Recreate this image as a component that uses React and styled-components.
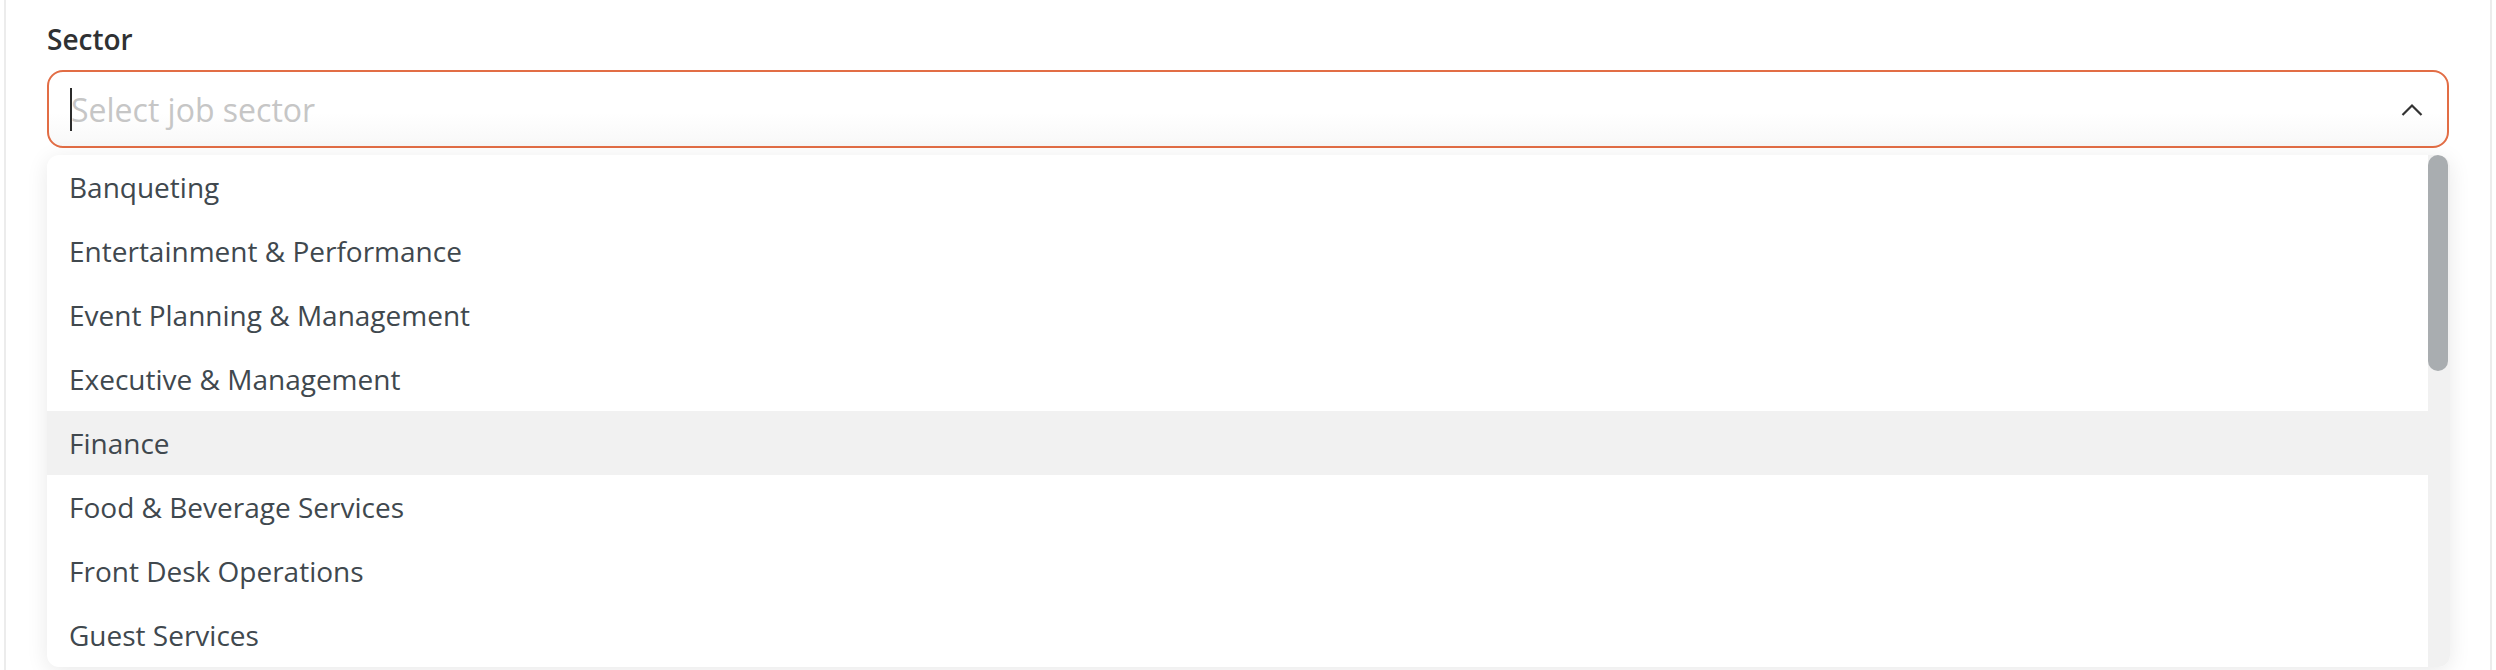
import React from 'react'
import styled, { createGlobalStyle } from 'styled-components'

const GlobalStyle = createGlobalStyle`
  html, body {
    margin: 0;
    padding: 0;
    background: #fff;
  }
  body {
    font-family: 'Open Sans', 'Noto Sans', sans-serif;
  }
`

const sectors = [
  'Banqueting',
  'Entertainment & Performance',
  'Event Planning & Management',
  'Executive & Management',
  'Finance',
  'Food & Beverage Services',
  'Front Desk Operations',
  'Guest Services',
]

// the full list is 19 rows long, only 8 fit in the menu
const TOTAL_ROWS = 19
const ROW_HEIGHT = 64
const MENU_HEIGHT = 512

const Page = styled.div`
  margin: 0 4px;
  min-height: 100vh;
  box-sizing: border-box;
  border-left: 2px solid #ececec;
  border-right: 2px solid #ececec;
  padding: 20px 41px 0;
`

const Label = styled.div`
  font-size: 28px;
  line-height: 38px;
  font-weight: 600;
  color: #2f3133;
  margin-bottom: 12px;
`

const Field = styled.div`
  position: relative;
`

const Control = styled.div`
  display: flex;
  align-items: center;
  height: 78px;
  box-sizing: border-box;
  border: 2px solid #e26d45;
  border-radius: 16px;
  padding: 0 24px 0 21px;
  background: linear-gradient(#ffffff 55%, #f8f8f8);
`

const Caret = styled.span`
  width: 2px;
  height: 43px;
  background: #2b2b2b;
  margin-right: -1px;
  flex-shrink: 0;
`

const Placeholder = styled.span`
  flex: 1;
  font-size: 32px;
  color: #c6c6c6;
  white-space: nowrap;
`

const Chevron = styled.svg`
  width: 22px;
  height: 13px;
  flex-shrink: 0;
`

const Menu = styled.div`
  position: absolute;
  top: calc(100% + 7px);
  left: 0;
  right: -1px;
  height: ${MENU_HEIGHT}px;
  display: flex;
  overflow: hidden;
  background: #fff;
  border-radius: 12px;
  box-shadow: 0 4px 22px rgba(0, 0, 0, 0.09);
`

const List = styled.div`
  flex: 1;
  min-width: 0;
`

const Option = styled.div`
  height: ${ROW_HEIGHT}px;
  display: flex;
  align-items: center;
  padding-left: 22px;
  font-size: 28px;
  color: #40484e;
  background: ${(p) => (p.$active ? '#f1f1f1' : 'transparent')};
  white-space: nowrap;
`

const Track = styled.div`
  width: 22px;
  box-sizing: border-box;
  padding-right: 2px;
  background: #f1f1f1;
  flex-shrink: 0;
`

const Thumb = styled.div`
  background: #a9adb0;
  border-radius: 10px;
`

export default function App() {
  const thumbHeight = (MENU_HEIGHT * MENU_HEIGHT) / (TOTAL_ROWS * ROW_HEIGHT)

  return (
    <>
      <GlobalStyle />
      <Page>
        <Label>Sector</Label>
        <Field>
          <Control>
            <Caret />
            <Placeholder>Select job sector</Placeholder>
            <Chevron viewBox="0 0 22 13" fill="none">
              <path d="M1.5 12 L11 2.5 L20.5 12" stroke="#333" strokeWidth="2.2" />
            </Chevron>
          </Control>
          <Menu>
            <List>
              {sectors.map((s) => (
                <Option key={s} $active={s === 'Finance'}>
                  {s}
                </Option>
              ))}
            </List>
            <Track>
              <Thumb style={{ height: thumbHeight }} />
            </Track>
          </Menu>
        </Field>
      </Page>
    </>
  )
}
